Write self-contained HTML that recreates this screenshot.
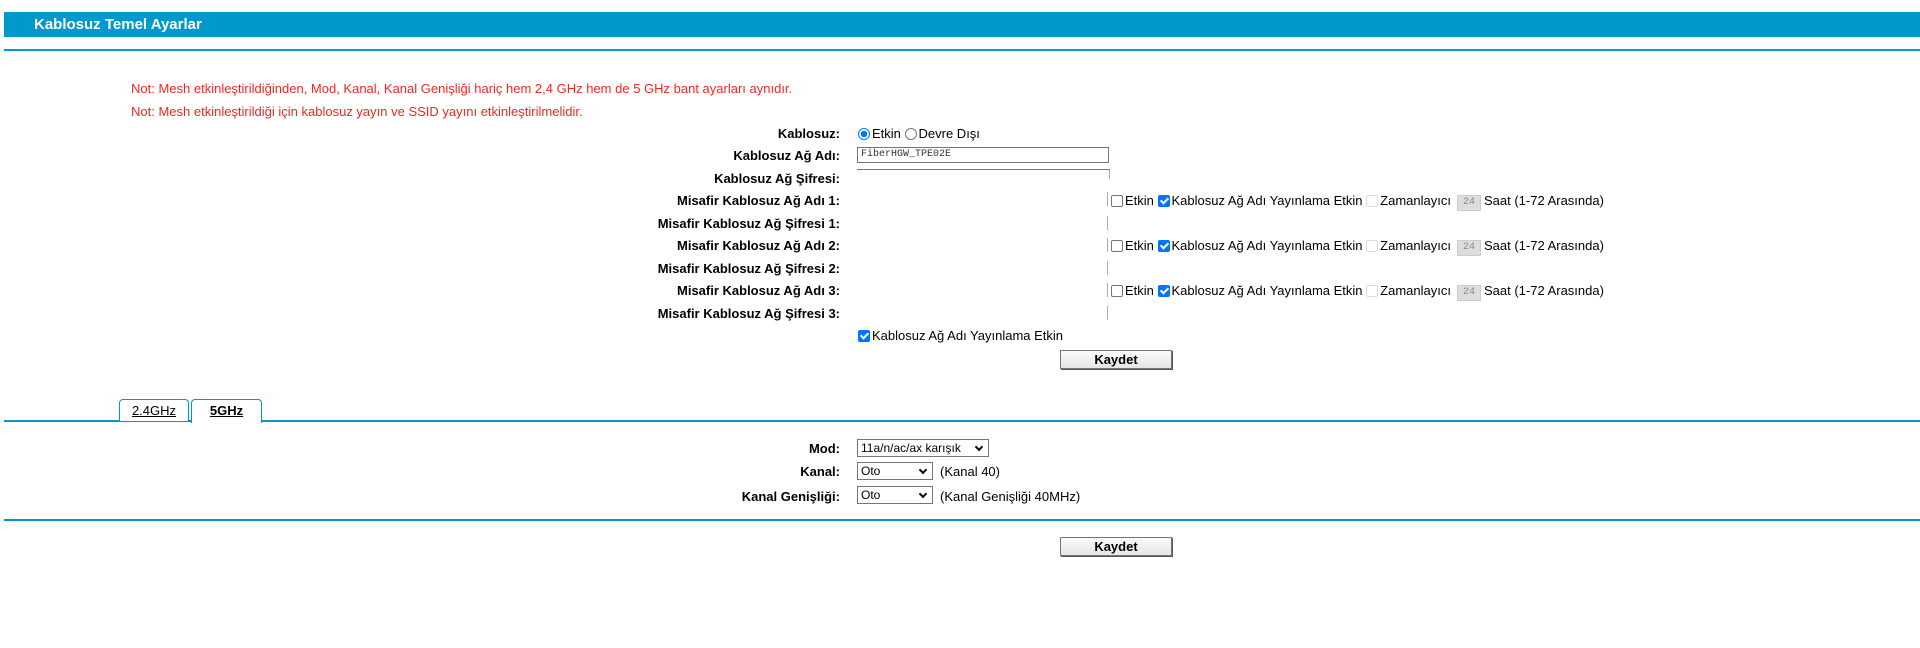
<!DOCTYPE html>
<html><head><meta charset="utf-8"><style>
body{margin:0;width:1920px;height:648px;background:#fff;font-family:"Liberation Sans",Arial,sans-serif;font-size:13px;color:#000;position:relative;overflow:hidden}
.a{position:absolute;white-space:nowrap}
.hdr{left:4px;top:12px;width:1916px;height:25px;background:#0099cc}
.hdr span{position:absolute;left:30px;top:4px;color:#fff;font-weight:bold;font-size:15px}
.line{left:4px;width:1916px;height:2px;background:#0099cc}
.red{color:#f0281e;left:131px}
.lbl{right:1080px;font-weight:bold;text-align:right}
.inp{border:1px solid #767676;height:16px;box-sizing:border-box}
.cb{display:inline-block;width:12px;height:12px;border:1px solid #767676;border-radius:2px;vertical-align:-2px;margin-right:2px;background:#fff;box-sizing:border-box}
.cb.on{background:#0075ff;border-color:#0075ff;position:relative}
.cb.on:after{content:"";position:absolute;left:3px;top:0px;width:3px;height:6px;border:solid #fff;border-width:0 2px 2px 0;transform:rotate(45deg)}
.cb.dis{border-color:#ddd}
.rd{display:inline-block;width:12px;height:12px;border:1px solid #767676;border-radius:50%;vertical-align:-2px;margin-right:2px;box-sizing:border-box}
.rd.on{border:1px solid #0075ff;background:radial-gradient(circle,#0075ff 3px,#fff 3.5px)}
.n24{display:inline-block;width:24px;height:16px;background:#ddd;border:1px solid #ccc;box-sizing:border-box;font-family:"Liberation Mono",monospace;font-size:10px;color:#888;text-align:center;line-height:14px;vertical-align:1px;margin:0 3px 0 6px}
.btn{width:112px;height:19px;border:1px solid #767676;background:linear-gradient(#fafafa,#e6e6e6);font-weight:bold;text-align:center;line-height:17px;box-sizing:border-box;box-shadow:1px 1px 0 #555}
.sel{border:1px solid #767676;height:18px;box-sizing:border-box;font-size:12px;line-height:16px;padding-left:3px;background:#fff}
.sel:after{content:"";position:absolute;right:6px;top:4px;width:4px;height:4px;border:solid #000;border-width:0 2px 2px 0;transform:rotate(45deg)}
.tab{top:399px;height:22px;border:1px solid #0099cc;border-bottom:none;border-radius:4px 4px 0 0;text-align:center;line-height:22px;text-decoration:underline;box-sizing:border-box;background:#fff}
.vb{width:1px;height:14px;background:#aaa}
</style></head><body>
<div class="a hdr"><span>Kablosuz Temel Ayarlar</span></div>
<div class="a line" style="top:49px"></div>
<div class="a red" style="top:81px">Not: Mesh etkinleştirildiğinden, Mod, Kanal, Kanal Genişliği hariç hem 2,4 GHz hem de 5 GHz bant ayarları aynıdır.</div>
<div class="a red" style="top:104px">Not: Mesh etkinleştirildiği için kablosuz yayın ve SSID yayını etkinleştirilmelidir.</div>

<div class="a lbl" style="top:126px">Kablosuz:</div>
<div class="a" style="left:858px;top:126px"><span class="rd on"></span>Etkin <span class="rd"></span>Devre Dışı</div>
<div class="a lbl" style="top:148px">Kablosuz Ağ Adı:</div>
<div class="a inp" style="left:857px;top:147px;width:252px;font-family:'Liberation Mono',monospace;font-size:10px;padding-left:3px;line-height:14px;color:#333">FiberHGW_TPE02E</div>
<div class="a lbl" style="top:171px">Kablosuz Ağ Şifresi:</div>
<div class="a" style="left:857px;top:169px;width:252px;height:9px;border-top:1px solid #767676;border-right:1px solid #aaa"></div>

<div class="a lbl" style="top:193px">Misafir Kablosuz Ağ Adı 1:</div>
<div class="a lbl" style="top:216px">Misafir Kablosuz Ağ Şifresi 1:</div>
<div class="a lbl" style="top:238px">Misafir Kablosuz Ağ Adı 2:</div>
<div class="a lbl" style="top:261px">Misafir Kablosuz Ağ Şifresi 2:</div>
<div class="a lbl" style="top:283px">Misafir Kablosuz Ağ Adı 3:</div>
<div class="a lbl" style="top:306px">Misafir Kablosuz Ağ Şifresi 3:</div>

<div class="a vb" style="left:1107px;top:192px"></div>
<div class="a vb" style="left:1107px;top:216px"></div>
<div class="a vb" style="left:1107px;top:238px"></div>
<div class="a vb" style="left:1107px;top:261px"></div>
<div class="a vb" style="left:1107px;top:283px"></div>
<div class="a vb" style="left:1107px;top:306px"></div>

<div class="a" style="left:1111px;top:193px"><span class="cb"></span>Etkin <span class="cb on"></span>Kablosuz Ağ Adı Yayınlama Etkin <span class="cb dis"></span>Zamanlayıcı<span class="n24">24</span>Saat (1-72 Arasında)</div>
<div class="a" style="left:1111px;top:238px"><span class="cb"></span>Etkin <span class="cb on"></span>Kablosuz Ağ Adı Yayınlama Etkin <span class="cb dis"></span>Zamanlayıcı<span class="n24">24</span>Saat (1-72 Arasında)</div>
<div class="a" style="left:1111px;top:283px"><span class="cb"></span>Etkin <span class="cb on"></span>Kablosuz Ağ Adı Yayınlama Etkin <span class="cb dis"></span>Zamanlayıcı<span class="n24">24</span>Saat (1-72 Arasında)</div>

<div class="a" style="left:858px;top:328px"><span class="cb on"></span>Kablosuz Ağ Adı Yayınlama Etkin</div>
<div class="a btn" style="left:1060px;top:350px">Kaydet</div>

<div class="a line" style="top:420px"></div>
<div class="a tab" style="left:119px;width:70px">2.4GHz</div>
<div class="a tab" style="left:191px;width:71px;height:24px;font-weight:bold">5GHz</div>

<div class="a lbl" style="top:441px">Mod:</div>
<div class="a sel" style="left:857px;top:439px;width:132px">11a/n/ac/ax karışık</div>
<div class="a lbl" style="top:464px">Kanal:</div>
<div class="a sel" style="left:857px;top:462px;width:76px">Oto</div>
<div class="a" style="left:940px;top:464px">(Kanal 40)</div>
<div class="a lbl" style="top:489px">Kanal Genişliği:</div>
<div class="a sel" style="left:857px;top:486px;width:76px">Oto</div>
<div class="a" style="left:940px;top:489px">(Kanal Genişliği 40MHz)</div>

<div class="a line" style="top:519px"></div>
<div class="a btn" style="left:1060px;top:537px">Kaydet</div>
</body></html>
